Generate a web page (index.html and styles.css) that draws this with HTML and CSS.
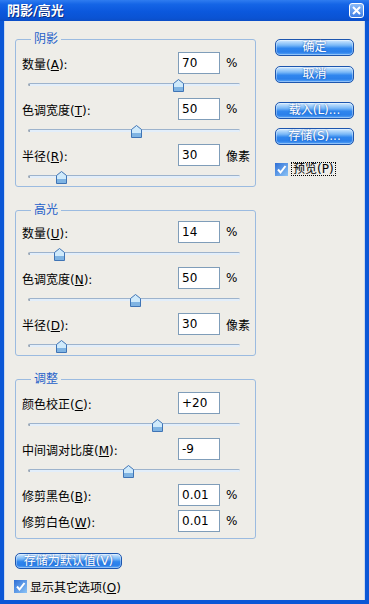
FILE: index.html
```html
<!DOCTYPE html>
<html lang="zh">
<head>
<meta charset="utf-8">
<title>阴影/高光</title>
<link rel="stylesheet" href="styles.css">
</head>
<body>
<div class="window">
  <div class="titlebar">
    <span class="title">阴影/高光</span>
    <span class="close"><svg width="9" height="9" viewBox="0 0 9 9"><path d="M1 1 L8 8 M8 1 L1 8" stroke="#fff" stroke-width="2"/></svg></span>
  </div>
  <div class="frame">
    <div class="main">
      <div class="groups">
        <fieldset class="group g1">
          <legend>阴影</legend>
          <div class="row"><span class="lbl">数量(<u>A</u>):</span><span class="field">70</span><span class="unit">%</span></div>
          <div class="slider"><span class="track"></span><svg class="thumb" style="left:145px" width="11" height="13" viewBox="0 0 11 13"><path d="M0.5 4.5 L5.5 0.5 L10.5 4.5 L10.5 12.5 L0.5 12.5 Z" fill="#CFEAFB" stroke="#3F74B5"/><path d="M1 8 H10 V12 H1 Z" fill="#7FB4E3"/></svg></div>
          <div class="row"><span class="lbl">色调宽度(<u>T</u>):</span><span class="field">50</span><span class="unit">%</span></div>
          <div class="slider"><span class="track"></span><svg class="thumb" style="left:103px" width="11" height="13" viewBox="0 0 11 13"><path d="M0.5 4.5 L5.5 0.5 L10.5 4.5 L10.5 12.5 L0.5 12.5 Z" fill="#CFEAFB" stroke="#3F74B5"/><path d="M1 8 H10 V12 H1 Z" fill="#7FB4E3"/></svg></div>
          <div class="row"><span class="lbl">半径(<u>R</u>):</span><span class="field">30</span><span class="unit">像素</span></div>
          <div class="slider end"><span class="track"></span><svg class="thumb" style="left:28px" width="11" height="13" viewBox="0 0 11 13"><path d="M0.5 4.5 L5.5 0.5 L10.5 4.5 L10.5 12.5 L0.5 12.5 Z" fill="#CFEAFB" stroke="#3F74B5"/><path d="M1 8 H10 V12 H1 Z" fill="#7FB4E3"/></svg></div>
        </fieldset>
        <fieldset class="group g2">
          <legend>高光</legend>
          <div class="row"><span class="lbl">数量(<u>U</u>):</span><span class="field">14</span><span class="unit">%</span></div>
          <div class="slider"><span class="track"></span><svg class="thumb" style="left:26px" width="11" height="13" viewBox="0 0 11 13"><path d="M0.5 4.5 L5.5 0.5 L10.5 4.5 L10.5 12.5 L0.5 12.5 Z" fill="#CFEAFB" stroke="#3F74B5"/><path d="M1 8 H10 V12 H1 Z" fill="#7FB4E3"/></svg></div>
          <div class="row"><span class="lbl">色调宽度(<u>N</u>):</span><span class="field">50</span><span class="unit">%</span></div>
          <div class="slider"><span class="track"></span><svg class="thumb" style="left:102px" width="11" height="13" viewBox="0 0 11 13"><path d="M0.5 4.5 L5.5 0.5 L10.5 4.5 L10.5 12.5 L0.5 12.5 Z" fill="#CFEAFB" stroke="#3F74B5"/><path d="M1 8 H10 V12 H1 Z" fill="#7FB4E3"/></svg></div>
          <div class="row"><span class="lbl">半径(<u>D</u>):</span><span class="field">30</span><span class="unit">像素</span></div>
          <div class="slider end"><span class="track"></span><svg class="thumb" style="left:28px" width="11" height="13" viewBox="0 0 11 13"><path d="M0.5 4.5 L5.5 0.5 L10.5 4.5 L10.5 12.5 L0.5 12.5 Z" fill="#CFEAFB" stroke="#3F74B5"/><path d="M1 8 H10 V12 H1 Z" fill="#7FB4E3"/></svg></div>
        </fieldset>
        <fieldset class="group g3">
          <legend>调整</legend>
          <div class="row"><span class="lbl">颜色校正(<u>C</u>):</span><span class="field">+20</span></div>
          <div class="slider"><span class="track"></span><svg class="thumb" style="left:124px" width="11" height="13" viewBox="0 0 11 13"><path d="M0.5 4.5 L5.5 0.5 L10.5 4.5 L10.5 12.5 L0.5 12.5 Z" fill="#CFEAFB" stroke="#3F74B5"/><path d="M1 8 H10 V12 H1 Z" fill="#7FB4E3"/></svg></div>
          <div class="row"><span class="lbl">中间调对比度(<u>M</u>):</span><span class="field">-9</span></div>
          <div class="slider"><span class="track"></span><svg class="thumb" style="left:95px" width="11" height="13" viewBox="0 0 11 13"><path d="M0.5 4.5 L5.5 0.5 L10.5 4.5 L10.5 12.5 L0.5 12.5 Z" fill="#CFEAFB" stroke="#3F74B5"/><path d="M1 8 H10 V12 H1 Z" fill="#7FB4E3"/></svg></div>
          <div class="row"><span class="lbl">修剪黑色(<u>B</u>):</span><span class="field">0.01</span><span class="unit">%</span></div>
          <div class="row tight"><span class="lbl">修剪白色(<u>W</u>):</span><span class="field">0.01</span><span class="unit">%</span></div>
        </fieldset>
      </div>
      <div class="side">
        <div class="btn b-ok">确定</div>
        <div class="btn b-cancel">取消</div>
        <div class="btn b-load">载入(L)...</div>
        <div class="btn b-save">存储(S)...</div>
        <div class="check preview">
          <svg class="box" width="13" height="13" viewBox="0 0 13 13"><defs><linearGradient id="cb1" x1="0" y1="0" x2="1" y2="1"><stop offset="0" stop-color="#2E6FD6"/><stop offset="1" stop-color="#8CC4F6"/></linearGradient></defs><rect x="0" y="0" width="13" height="13" fill="url(#cb1)"/><path d="M3 6.5 L5.5 9.5 L10.5 3" fill="none" stroke="#fff" stroke-width="2"/></svg>
          <span class="focus">预览(P)</span>
        </div>
      </div>
    </div>
    <div class="btn b-default">存储为默认值(V)</div>
    <div class="check more">
      <svg class="box" width="13" height="13" viewBox="0 0 13 13"><defs><linearGradient id="cb2" x1="0" y1="0" x2="1" y2="1"><stop offset="0" stop-color="#2E6FD6"/><stop offset="1" stop-color="#8CC4F6"/></linearGradient></defs><rect x="0" y="0" width="13" height="13" fill="url(#cb2)"/><path d="M3 6.5 L5.5 9.5 L10.5 3" fill="none" stroke="#fff" stroke-width="2"/></svg>
      <span>显示其它选项(<u>O</u>)</span>
    </div>
  </div>
</div>
</body>
</html>
```
FILE: styles.css
```css
html, body {
  margin: 0;
  padding: 0;
  background: #0B57D6;
}
body {
  font-family: "DejaVu Sans", "Noto Sans CJK SC", sans-serif;
  font-size: 12px;
  color: #000;
}
.window {
  width: 369px;
  height: 604px;
  display: flex;
  flex-direction: column;
  background: #0B57D6;
}
.titlebar {
  height: 21px;
  flex: none;
  display: flex;
  align-items: center;
  justify-content: space-between;
  padding: 0 5px 0 7px;
  background: linear-gradient(#2F7CF0 0%, #1565E6 20%, #0B58DD 55%, #0A53D4 85%, #0B4EC6 100%);
}
.title {
  color: #fff;
  font-weight: bold;
  font-size: 13px;
  line-height: 16px;
  text-shadow: 1px 1px 0 #0A2F86;
}
.close {
  width: 15px;
  height: 15px;
  box-sizing: border-box;
  border: 1px solid #fff;
  border-radius: 3px;
  display: flex;
  align-items: center;
  justify-content: center;
  background: linear-gradient(#8DBCF8, #3D7EE6);
}
.frame {
  flex: 1;
  border: 4px solid #0B57D6;
  border-top: 0;
  background: #EEEDE8;
  padding: 11px 11px 0 11px;
  display: flex;
  flex-direction: column;
  box-shadow: inset 1px 0 0 #C9D8EE, inset -1px 0 0 #C9D8EE;
}
.main {
  display: flex;
  gap: 19px;
}
.groups {
  width: 241px;
  display: flex;
  flex-direction: column;
  gap: 16px;
}
.group {
  margin: 0;
  min-width: 0;
  border: 1px solid #9BBBE0;
  border-radius: 3px;
  padding: 0 0 0 6px;
}
.group legend {
  margin-left: 9px;
  padding: 0 3px;
  color: #1E5FC9;
  line-height: 14px;
  font-size: 12px;
}
.g1 { padding-top: 6px; }
.g2 { padding-top: 4px; }
.g3 { padding-top: 6px; padding-bottom: 6px; }
.row {
  display: flex;
  align-items: center;
  height: 22px;
}
.row.tight { margin-top: 4px; }
.lbl {
  width: 156px;
  flex: none;
}
.field {
  width: 42px;
  height: 22px;
  box-sizing: border-box;
  border: 1px solid #7F9DB9;
  background: #fff;
  padding-left: 3px;
  line-height: 20px;
  flex: none;
}
.unit {
  margin-left: 6px;
}
.slider {
  position: relative;
  width: 212px;
  height: 24px;
  margin-left: 6px;
}
.slider.end { height: 20px; }
.track {
  position: absolute;
  left: 0;
  right: 0;
  top: 9px;
  height: 3px;
  box-sizing: border-box;
  border-top: 1px solid #9DB3CC;
  border-left: 2px solid #9AA8B8;
  background: #E2EEFA;
  border-radius: 2px;
}
.thumb {
  position: absolute;
  top: 5px;
  display: block;
}
.side {
  width: 79px;
  display: flex;
  flex-direction: column;
}
.btn {
  height: 17px;
  box-sizing: border-box;
  border: 1px solid #1D56AE;
  border-radius: 5px;
  color: #fff;
  text-align: center;
  line-height: 15px;
  font-size: 12px;
  text-shadow: 0 0 2px #1A4FA8;
  background: linear-gradient(#D4EBFF 0%, #79B8F7 35%, #2F86EE 55%, #2A7FEA 80%, #5CA7F7 100%);
  box-shadow: inset 0 0 0 1px rgba(255,255,255,0.35);
}
.b-ok { margin-top: 7px; }
.b-cancel { margin-top: 10px; }
.b-load { margin-top: 19px; }
.b-save { margin-top: 9px; }
.check {
  display: flex;
  align-items: center;
  gap: 3px;
}
.check .box { display: block; flex: none; }
.preview { margin-top: 17px; }
.focus {
  border: 1px dotted #000;
  padding: 0 1px;
  line-height: 12px;
}
.b-default {
  width: 107px;
  height: 16px;
  line-height: 14px;
  margin-top: 14px;
}
.more {
  margin-top: 9px;
  margin-left: -1px;
}
```
